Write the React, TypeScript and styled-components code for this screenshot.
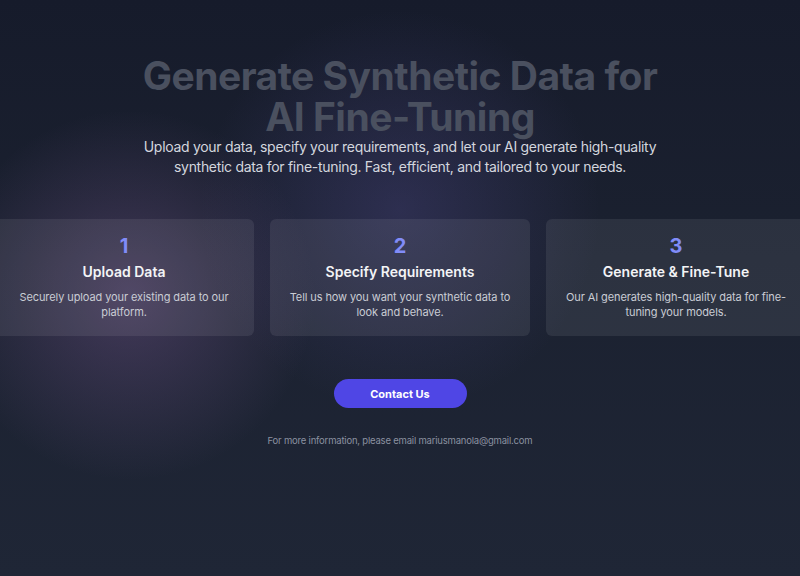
import styled, { createGlobalStyle } from "styled-components";

const GlobalStyle = createGlobalStyle`
  html, body {
    margin: 0;
    padding: 0;
    background: #1c2231;
  }
  body {
    font-family: Inter, "Noto Sans", sans-serif;
    -webkit-font-smoothing: antialiased;
  }
`;

const steps = [
  {
    num: "1",
    title: "Upload Data",
    text: "Securely upload your existing data to our platform.",
  },
  {
    num: "2",
    title: "Specify Requirements",
    text: "Tell us how you want your synthetic data to look and behave.",
  },
  {
    num: "3",
    title: "Generate & Fine-Tune",
    text: "Our AI generates high-quality data for fine-tuning your models.",
  },
];

const App = () => {
  return (
    <>
      <GlobalStyle />
      <Page>
        <Hero>
          <Title>Generate Synthetic Data for AI Fine-Tuning</Title>
          <Subtitle>
            Upload your data, specify your requirements, and let our AI generate
            high-quality synthetic data for fine-tuning. Fast, efficient, and
            tailored to your needs.
          </Subtitle>
        </Hero>

        <Cards>
          {steps.map((s) => (
            <Card key={s.num}>
              <Num>{s.num}</Num>
              <CardTitle>{s.title}</CardTitle>
              <CardText>{s.text}</CardText>
            </Card>
          ))}
        </Cards>

        <Button type="button">Contact Us</Button>
        <Footer>For more information, please email mariusmanola@gmail.com</Footer>
      </Page>
    </>
  );
};

const Page = styled.div`
  position: relative;
  min-height: 576px;
  overflow: hidden;
  display: flex;
  flex-direction: column;
  align-items: center;
  padding-top: 55px;
  box-sizing: border-box;
  background:
    radial-gradient(circle at 130px 295px, rgba(130, 95, 155, 0.38) 0, rgba(130, 95, 155, 0) 185px),
    radial-gradient(circle at 400px 210px, rgba(95, 85, 165, 0.28) 0, rgba(95, 85, 165, 0) 200px),
    linear-gradient(180deg, #161b2b 0%, #1b2130 45%, #1f2636 100%);
`;

const Hero = styled.div`
  display: flex;
  flex-direction: column;
  align-items: center;
  text-align: center;
`;

const Title = styled.h1`
  margin: 0;
  max-width: 560px;
  font-size: 39px;
  line-height: 41px;
  font-weight: 700;
  letter-spacing: -0.5px;
  color: #4a505f;
`;

const Subtitle = styled.p`
  margin: 0;
  max-width: 560px;
  font-size: 14px;
  line-height: 19.5px;
  letter-spacing: -0.3px;
  color: #d3d6de;
`;

const Cards = styled.div`
  display: grid;
  grid-template-columns: repeat(3, 260px);
  gap: 16px;
  margin-top: 43px;
  flex-shrink: 0;
`;

const Card = styled.div`
  display: flex;
  flex-direction: column;
  align-items: center;
  text-align: center;
  height: 117px;
  box-sizing: border-box;
  padding: 16px 14px;
  border-radius: 6px;
  background: rgba(255, 255, 255, 0.08);
`;

const Num = styled.div`
  font-size: 20px;
  line-height: 22px;
  font-weight: 700;
  color: #818cf8;
`;

const CardTitle = styled.div`
  margin-top: 5px;
  font-size: 14px;
  line-height: 20px;
  font-weight: 600;
  color: #f3f4f6;
`;

const CardText = styled.div`
  margin-top: 8px;
  font-size: 11px;
  line-height: 15px;
  letter-spacing: -0.1px;
  color: #c9ccd4;
`;

const Button = styled.button`
  margin-top: 43px;
  width: 133px;
  height: 29px;
  border: none;
  border-radius: 999px;
  background: #4f46e5;
  color: #ffffff;
  font-family: inherit;
  font-size: 11px;
  font-weight: 700;
  cursor: pointer;
`;

const Footer = styled.p`
  margin: 26px 0 0;
  font-size: 9.5px;
  line-height: 14px;
  letter-spacing: -0.2px;
  color: #8b91a0;
`;

export default App;
